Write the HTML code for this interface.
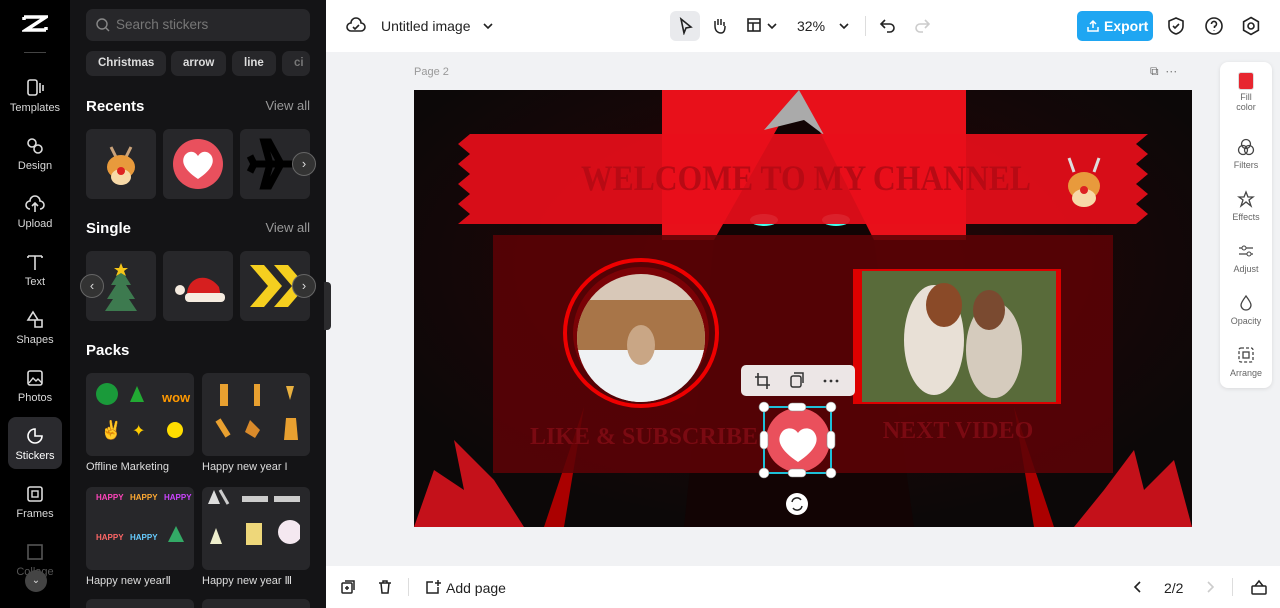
<!DOCTYPE html>
<html style="width:1280px;height:608px;overflow:hidden"><head><meta charset="utf-8"><style>
*{box-sizing:border-box;margin:0;padding:0}
body{width:1280px;height:608px;overflow:hidden;font-family:"Liberation Sans",sans-serif;background:#f1f2f4;position:relative}
.abs{position:absolute}
#nav{left:0;top:0;width:70px;height:608px;background:#000;overflow:hidden}
.ni{position:absolute;left:0;width:70px;text-align:center;color:#d8d8d8;font-size:11px}
.ni svg{display:block;margin:0 auto 4px}
#panel{left:70px;top:0;width:256px;height:608px;background:#141416;overflow:hidden}
.chip{position:absolute;top:51px;height:25px;background:#27272a;border-radius:7px;color:#ddd;font-size:11.5px;font-weight:bold;line-height:25px;padding:0 12px}
.h{position:absolute;color:#fff;font-weight:bold;font-size:15px}
.va{position:absolute;right:16px;color:#999;font-size:13px}
.tile{position:absolute;width:70px;height:70px;background:#27272a;border-radius:6px;overflow:hidden}
.pk{position:absolute;width:108px;height:83px;background:#27272a;border-radius:6px}
.pl{position:absolute;color:#ddd;font-size:11px}
.arr{position:absolute;width:24px;height:24px;border-radius:50%;background:#333;border:1px solid #666;color:#ddd;font-size:13px;text-align:center;line-height:21px}
#top{left:326px;top:0;width:954px;height:52px;background:#fff}
#bot{left:326px;top:566px;width:954px;height:42px;background:#fff}
#rp{left:1220px;top:62px;width:52px;height:326px;background:#fff;border-radius:8px;box-shadow:0 1px 4px rgba(0,0,0,.1)}
.ri{position:absolute;left:0;width:52px;text-align:center;font-size:9px;color:#666}
#cv{left:414px;top:90px;width:778px;height:437px;background:#0f0b0b;overflow:hidden}
</style></head><body>
<div id="nav" class="abs">
 <div class="abs" style="left:22px;top:14px;width:26px;height:22px">
 <svg width="26" height="20" viewBox="0 0 26 20"><path d="M2 3h22L4 16h20M2 3v3M24 16v-3" stroke="#fff" stroke-width="3.5" fill="none"/></svg></div>
 <div class="abs" style="left:24px;top:52px;width:22px;height:1px;background:#444"></div>
 <div class="ni" style="top:78px"><svg width="20" height="20"><rect x="3" y="2" width="9" height="15" rx="2" stroke="#ddd" fill="none" stroke-width="1.6"/><path d="M15 5v10M18 7v6" stroke="#ddd" stroke-width="1.6"/></svg>Templates</div>
 <div class="ni" style="top:136px"><svg width="20" height="20"><circle cx="7" cy="7" r="4" stroke="#ddd" fill="none" stroke-width="1.6"/><circle cx="13" cy="13" r="4" stroke="#ddd" fill="none" stroke-width="1.6"/></svg>Design</div>
 <div class="ni" style="top:194px"><svg width="20" height="20"><path d="M5 15a4 4 0 0 1 0-8 5 5 0 0 1 10 0 4 4 0 0 1 0 8M10 9v9M7 12l3-3 3 3" stroke="#ddd" fill="none" stroke-width="1.6"/></svg>Upload</div>
 <div class="ni" style="top:252px"><svg width="20" height="20"><path d="M3 4h14M10 4v14M3 4v2M17 4v2" stroke="#ddd" fill="none" stroke-width="1.6"/></svg>Text</div>
 <div class="ni" style="top:310px"><svg width="20" height="20"><path d="M8 2l5 8H3z M10 10h7v7h-7z" stroke="#ddd" fill="none" stroke-width="1.6"/></svg>Shapes</div>
 <div class="ni" style="top:368px"><svg width="20" height="20"><rect x="3" y="3" width="14" height="14" rx="2" stroke="#ddd" fill="none" stroke-width="1.6"/><path d="M4 15l4-5 3 3 2-2 4 4" stroke="#ddd" fill="none" stroke-width="1.4"/></svg>Photos</div>
 <div class="abs" style="left:8px;top:417px;width:54px;height:52px;background:#2a2a2e;border-radius:8px"></div>
 <div class="ni" style="top:426px;color:#fff"><svg width="20" height="20"><path d="M10 3a7 7 0 1 0 7 7h-7z" stroke="#fff" fill="none" stroke-width="1.6"/></svg>Stickers</div>
 <div class="ni" style="top:484px"><svg width="20" height="20"><rect x="3" y="3" width="14" height="14" rx="2" stroke="#ddd" fill="none" stroke-width="1.6"/><rect x="7" y="7" width="6" height="6" stroke="#ddd" fill="none" stroke-width="1.4"/></svg>Frames</div>
 <div class="ni" style="top:542px;color:#555;height:40px;overflow:hidden"><svg width="20" height="20"><rect x="3" y="3" width="14" height="14" stroke="#555" fill="none" stroke-width="1.6"/></svg>Collage</div>
 <div class="abs" style="left:25px;top:570px;width:22px;height:22px;border-radius:50%;background:#444;color:#ddd;font-size:10px;text-align:center;line-height:22px">⌄</div>
</div>
<div id="panel" class="abs">
 <div class="abs" style="left:16px;top:9px;width:224px;height:32px;background:#27272a;border-radius:7px;color:#777;font-size:13.5px;line-height:32px;padding-left:30px">Search stickers
  <svg class="abs" style="left:10px;top:9px" width="14" height="14"><circle cx="6" cy="6" r="5" stroke="#888" fill="none" stroke-width="1.4"/><path d="M10 10l3 3" stroke="#888" stroke-width="1.4"/></svg></div>
 <div class="chip" style="left:16px">Christmas</div>
 <div class="chip" style="left:101px">arrow</div>
 <div class="chip" style="left:162px">line</div>
 <div class="chip" style="left:212px;width:28px;padding:0 0 0 12px;color:#777;overflow:hidden">ci</div>
 <div class="h" style="left:16px;top:98px">Recents</div><div class="va" style="top:98px">View all</div>
 <div class="tile" style="left:16px;top:129px"><svg width="70" height="70"><path d="M25 18l5 10M45 18l-5 10" stroke="#c9a27a" stroke-width="3"/><ellipse cx="35" cy="38" rx="14" ry="12" fill="#e89a3c"/><ellipse cx="35" cy="48" rx="10" ry="8" fill="#f7d9a8"/><circle cx="35" cy="42" r="4" fill="#d22"/></svg></div>
 <div class="tile" style="left:93px;top:129px"><svg width="70" height="70"><circle cx="35" cy="35" r="25" fill="#e9505d"/><path d="M35 50C20 40 18 32 22 26c4-5 10-4 13 1 3-5 9-6 13-1 4 6 2 14-13 24z" fill="#fff"/></svg></div>
 <div class="tile" style="left:170px;top:129px"><svg width="70" height="70"><path d="M10 35h48M30 35l-6-22h5l12 22M30 35l-6 22h5l12-22M14 35l-4-8M14 35l-4 8" stroke="#000" stroke-width="7" fill="none"/></svg></div>
 <div class="arr" style="left:222px;top:152px">›</div>
 <div class="h" style="left:16px;top:220px">Single</div><div class="va" style="top:220px">View all</div>
 <div class="tile" style="left:16px;top:251px"><svg width="70" height="70"><path d="M35 18l-10 16h5l-9 14h6l-8 12h32l-8-12h6l-9-14h5z" fill="#3d7a4f"/><path d="M35 12l2 5h5l-4 3 2 5-5-3-5 3 2-5-4-3h5z" fill="#f5c518"/></svg></div>
 <div class="tile" style="left:93px;top:251px"><svg width="70" height="70"><path d="M24 44c0-18 20-24 32-8l2 10z" fill="#d61f1f"/><rect x="22" y="42" width="40" height="9" rx="4" fill="#f5ece0"/><circle cx="17" cy="39" r="5" fill="#f5ece0"/></svg></div>
 <div class="tile" style="left:170px;top:251px"><svg width="70" height="70"><path d="M10 14h14l18 21-18 21H10l18-21z M34 14h14l18 21-18 21H34l18-21z" fill="#f5cf1f"/></svg></div>
 <div class="arr" style="left:10px;top:274px">‹</div><div class="arr" style="left:222px;top:274px">›</div>
 <div class="h" style="left:16px;top:342px">Packs</div>
 <div class="pk" style="left:16px;top:373px"></div><div class="pk" style="left:132px;top:373px"></div>
 <div class="pl" style="left:16px;top:461px">Offline Marketing</div><div class="pl" style="left:132px;top:461px">Happy new year I</div>
 <div class="pk" style="left:16px;top:487px"></div><div class="pk" style="left:132px;top:487px"></div>
 <div class="pl" style="left:16px;top:574px">Happy new yearⅡ</div><div class="pl" style="left:132px;top:574px">Happy new year Ⅲ</div>
 <div class="pk" style="left:16px;top:599px;height:9px;border-radius:6px 6px 0 0"></div><div class="pk" style="left:132px;top:599px;height:9px;border-radius:6px 6px 0 0"></div>
 <svg class="abs" style="left:20px;top:378px" width="210" height="190">
  <circle cx="17" cy="16" r="11" fill="#1a9a3a"/><path d="M47 8l-7 16h14z" fill="#2a3"/><text x="72" y="24" font-size="13" fill="#f90" font-weight="bold">wow</text>
  <text x="10" y="58" font-size="18" fill="#fff">✌</text><text x="42" y="58" font-size="16" fill="#fc0">✦</text><circle cx="85" cy="52" r="8" fill="#fd0"/>
  <rect x="130" y="6" width="8" height="22" fill="#e8a030"/><rect x="164" y="6" width="6" height="22" fill="#e8a030"/><path d="M196 8l8 0-4 14z" fill="#e8b040"/>
  <path d="M128 42l10 16" stroke="#e8a030" stroke-width="6"/><path d="M160 42l10 10 -5 8-10-6z" fill="#d98a2a"/><path d="M196 40l10 0 2 22h-14z" fill="#e8a030"/>
  <text x="6" y="122" font-size="8" fill="#f4b" font-weight="bold">HAPPY</text><text x="40" y="122" font-size="8" fill="#fa3" font-weight="bold">HAPPY</text><text x="74" y="122" font-size="8" fill="#c4f" font-weight="bold">HAPPY</text>
  <text x="6" y="162" font-size="8" fill="#f66" font-weight="bold">HAPPY</text><text x="40" y="162" font-size="8" fill="#6cf" font-weight="bold">HAPPY</text><path d="M86 148l-8 16h16z" fill="#3a6"/>
  <path d="M124 112l6 14h-12z" fill="#ddd"/><path d="M130 112l8 14" stroke="#ccc" stroke-width="3"/><rect x="152" y="118" width="26" height="6" fill="#ccc"/><rect x="184" y="118" width="26" height="6" fill="#ccc"/>
  <path d="M126 150l6 16h-12z" fill="#eec"/><rect x="156" y="145" width="16" height="22" fill="#eed77a"/><circle cx="200" cy="154" r="12" fill="#f4e8f0"/>
 </svg>
</div>
<div class="abs" style="left:324px;top:282px;width:7px;height:48px;background:#2b2b2d;border-radius:0 4px 4px 0"></div>
<div id="top" class="abs">
 <svg class="abs" style="left:20px;top:17px" width="20" height="18"><path d="M5 14a4 4 0 0 1 0-8 5 5 0 0 1 10 0 4 4 0 0 1 0 8z M7 10l2 2 4-4" stroke="#222" fill="none" stroke-width="1.6"/></svg>
 <div class="abs" style="left:55px;top:18px;font-size:14px;color:#222">Untitled image</div>
 <svg class="abs" style="left:156px;top:20px" width="12" height="12"><path d="M2 4l4 4 4-4" stroke="#222" fill="none" stroke-width="1.6"/></svg>
 <div class="abs" style="left:344px;top:11px;width:30px;height:30px;background:#e9eaed;border-radius:6px"></div>
 <svg class="abs" style="left:352px;top:17px" width="16" height="18"><path d="M3 2l10 8-5 1-2 5z" stroke="#222" fill="none" stroke-width="1.6"/></svg>
 <svg class="abs" style="left:384px;top:16px" width="18" height="18"><path d="M5 10V5m3 4V3m3 6V3m3 7V6M5 10c0 5 3 7 6 7s4-3 4-7" stroke="#222" fill="none" stroke-width="1.5"/></svg>
 <svg class="abs" style="left:420px;top:17px" width="16" height="16"><rect x="2" y="2" width="12" height="12" stroke="#222" fill="none" stroke-width="1.6"/><path d="M2 6h12M7 6v8" stroke="#222" stroke-width="1.6"/></svg>
 <svg class="abs" style="left:440px;top:20px" width="12" height="12"><path d="M2 4l4 4 4-4" stroke="#222" fill="none" stroke-width="1.6"/></svg>
 <div class="abs" style="left:471px;top:18px;font-size:14px;color:#222">32%</div>
 <svg class="abs" style="left:512px;top:20px" width="12" height="12"><path d="M2 4l4 4 4-4" stroke="#222" fill="none" stroke-width="1.6"/></svg>
 <div class="abs" style="left:539px;top:16px;width:1px;height:20px;background:#ddd"></div>
 <svg class="abs" style="left:553px;top:17px" width="18" height="16"><path d="M6 3L2 7l4 4M2 7h9a4 4 0 0 1 0 8H8" stroke="#222" fill="none" stroke-width="1.6"/></svg>
 <svg class="abs" style="left:587px;top:17px" width="18" height="16"><path d="M12 3l4 4-4 4M16 7H7a4 4 0 0 0 0 8h3" stroke="#ccc" fill="none" stroke-width="1.6"/></svg>
 <div class="abs" style="left:751px;top:11px;width:76px;height:30px;background:#1fa6f2;border-radius:5px;color:#fff;font-size:14px;font-weight:bold;line-height:30px;padding-left:27px">Export
  <svg class="abs" style="left:9px;top:8px" width="14" height="14"><path d="M7 9V2M4 5l3-3 3 3M2 8v4h10V8" stroke="#fff" fill="none" stroke-width="1.5"/></svg></div>
 <svg class="abs" style="left:841px;top:16px" width="18" height="20"><path d="M9 2l7 3v5c0 4-3 7-7 8-4-1-7-4-7-8V5z M6 10l2 2 4-4" stroke="#222" fill="none" stroke-width="1.6"/></svg>
 <svg class="abs" style="left:878px;top:16px" width="20" height="20"><circle cx="10" cy="10" r="8" stroke="#222" fill="none" stroke-width="1.6"/><path d="M7.5 8a2.5 2.5 0 1 1 3 2.4V12M10 14.5v.5" stroke="#222" fill="none" stroke-width="1.6"/></svg>
 <svg class="abs" style="left:915px;top:16px" width="20" height="20"><path d="M10 1.5l7.4 4.25v8.5L10 18.5l-7.4-4.25v-8.5z" stroke="#222" fill="none" stroke-width="1.6"/><circle cx="10" cy="10" r="3" stroke="#222" fill="none" stroke-width="1.6"/></svg>
</div>
<div class="abs" style="left:414px;top:66px;font-size:11px;color:#999">Page 2</div>
<div class="abs" style="left:1150px;top:64px;font-size:12px;color:#666">⧉ &nbsp;⋯</div>
<div id="cv" class="abs">
 <svg width="778" height="437" viewBox="0 0 778 437">
  <defs><radialGradient id="g" cx="50%" cy="40%" r="60%"><stop offset="0" stop-color="#2a0406"/><stop offset="1" stop-color="#0c0808"/></radialGradient></defs>
  <rect width="778" height="437" fill="url(#g)"/>
  <rect x="248" y="0" width="304" height="150" fill="#e8101a"/>
  <path d="M300 150L385 0 460 150 500 437H270z" fill="#120404"/>
  <path d="M350 40L385 0l25 45 -20-15z" fill="#aaa"/>
  <path d="M0 437L20 380 50 400 40 350 80 390 110 437z" fill="#c4111a"/>
  <path d="M778 437L760 370 730 400 720 360 690 400 660 437z" fill="#c4111a"/>
  <path d="M130 437l40-120 -20 120z M640 437l-40-120 20 120z" fill="#a00"/>
  <ellipse cx="350" cy="130" rx="14" ry="6" fill="#4fe"/><ellipse cx="422" cy="130" rx="14" ry="6" fill="#4fe"/>
  <path d="M44 44h690l-12 10 12 10-12 10 12 10-12 10 12 10-12 10 12 10-12 10H44l12-10-12-10 12-10-12-10 12-10-12-10 12-10-12-10 12-10z" fill="#e80e1a" opacity=".92"/>
  <text x="392" y="100" text-anchor="middle" font-family="Liberation Serif,serif" font-size="36" font-weight="bold" fill="#b80a14" textLength="450" lengthAdjust="spacingAndGlyphs">WELCOME TO MY CHANNEL</text>
  <ellipse cx="670" cy="96" rx="16" ry="14" fill="#e89a3c"/><ellipse cx="670" cy="108" rx="12" ry="9" fill="#f7d9a8"/><circle cx="670" cy="100" r="4" fill="#d22"/><path d="M660 82l-5-14M680 82l5-14" stroke="#ddd" stroke-width="3"/>
  <rect x="79" y="145" width="620" height="238" fill="#5c0206" opacity=".88"/>
  <ellipse cx="227" cy="243" rx="76" ry="73" fill="none" stroke="#e00" stroke-width="4"/>
  <ellipse cx="227" cy="243" rx="68" ry="66" fill="#7a0206"/>
  <clipPath id="c"><ellipse cx="227" cy="248" rx="64" ry="64"/></clipPath>
  <g clip-path="url(#c)"><rect x="160" y="180" width="140" height="140" fill="#d8c8b8"/><rect x="160" y="210" width="140" height="50" fill="#a87548"/><rect x="160" y="260" width="140" height="60" fill="#f0f2f4"/><ellipse cx="227" cy="255" rx="14" ry="20" fill="#c9a685"/></g>
  <rect x="439" y="179" width="208" height="135" fill="#d00"/>
  <rect x="448" y="181" width="194" height="131" fill="#596b3a"/>
  <ellipse cx="520" cy="250" rx="30" ry="55" fill="#e8e0d6"/><ellipse cx="580" cy="260" rx="28" ry="48" fill="#d5cbbd"/><ellipse cx="530" cy="215" rx="18" ry="22" fill="#8a4a28"/><ellipse cx="575" cy="220" rx="16" ry="20" fill="#7a4a30"/>
  <text x="230" y="354" text-anchor="middle" font-family="Liberation Serif,serif" font-size="24" font-weight="bold" fill="#7a0a12">LIKE &amp; SUBSCRIBE</text>
  <text x="544" y="348" text-anchor="middle" font-family="Liberation Serif,serif" font-size="24" font-weight="bold" fill="#7a0a12">NEXT VIDEO</text>
  <rect x="327" y="275" width="114" height="31" rx="5" fill="#ece6e6"/>
  <path d="M344 283v12h12M341 287h12v12" stroke="#333" fill="none" stroke-width="1.6"/>
  <rect x="377" y="286" width="10" height="11" rx="2" stroke="#333" fill="none" stroke-width="1.5"/><path d="M380 283h9v10" stroke="#333" fill="none" stroke-width="1.5"/>
  <circle cx="411" cy="291" r="1.4" fill="#333"/><circle cx="417" cy="291" r="1.4" fill="#333"/><circle cx="423" cy="291" r="1.4" fill="#333"/>
  <ellipse cx="384" cy="350" rx="32" ry="32" fill="#ea505c"/>
  <path d="M384 372c-18-12-22-22-16-30 4-5 12-5 16 1 4-6 12-6 16-1 6 8 2 18-16 30z" fill="#fff"/>
  <rect x="350" y="317" width="67" height="66" fill="none" stroke="#1ec0d8" stroke-width="2"/>
  <g fill="#fff" stroke="#888" stroke-width=".6"><circle cx="350" cy="317" r="5"/><circle cx="417" cy="317" r="5"/><circle cx="350" cy="383" r="5"/><circle cx="417" cy="383" r="5"/>
  <rect x="374" y="313" width="18" height="8" rx="4"/><rect x="374" y="379" width="18" height="8" rx="4"/><rect x="346" y="341" width="8" height="18" rx="4"/><rect x="413" y="341" width="8" height="18" rx="4"/></g>
  <circle cx="383" cy="414" r="11" fill="#fff"/><path d="M378 412a5 5 0 0 1 9-2M388 416a5 5 0 0 1-9 2" stroke="#222" fill="none" stroke-width="1.5"/>
 </svg>
</div>
<div id="rp" class="abs">
 <div class="ri" style="top:10px"><div style="width:16px;height:18px;margin:0 auto 2px;background:#e7262f;border:1px solid #ddd;border-radius:3px"></div>Fill<br>color</div>
 <div class="ri" style="top:76px"><svg width="18" height="18" style="display:block;margin:0 auto 4px"><circle cx="9" cy="6" r="4.5" stroke="#444" fill="none" stroke-width="1.3"/><circle cx="6" cy="12" r="4.5" stroke="#444" fill="none" stroke-width="1.3"/><circle cx="12" cy="12" r="4.5" stroke="#444" fill="none" stroke-width="1.3"/></svg>Filters</div>
 <div class="ri" style="top:128px"><svg width="18" height="18" style="display:block;margin:0 auto 4px"><path d="M9 2l2 5h5l-4 3 2 6-5-4-5 4 2-6-4-3h5z" stroke="#444" fill="none" stroke-width="1.3"/></svg>Effects</div>
 <div class="ri" style="top:180px"><svg width="18" height="18" style="display:block;margin:0 auto 4px"><path d="M2 6h14M2 12h14" stroke="#444" stroke-width="1.3"/><circle cx="7" cy="6" r="2" fill="#fff" stroke="#444"/><circle cx="12" cy="12" r="2" fill="#fff" stroke="#444"/></svg>Adjust</div>
 <div class="ri" style="top:232px"><svg width="18" height="18" style="display:block;margin:0 auto 4px"><path d="M9 2c3 4 5 7 5 9a5 5 0 0 1-10 0c0-2 2-5 5-9z" stroke="#444" fill="none" stroke-width="1.3"/></svg>Opacity</div>
 <div class="ri" style="top:284px"><svg width="18" height="18" style="display:block;margin:0 auto 4px"><rect x="2" y="2" width="14" height="14" rx="2" stroke="#444" fill="none" stroke-width="1.3" stroke-dasharray="3 2"/><rect x="6" y="6" width="6" height="6" stroke="#444" fill="none" stroke-width="1.3"/></svg>Arrange</div>
</div>
<div id="bot" class="abs">
 <svg class="abs" style="left:14px;top:13px" width="16" height="16"><rect x="2" y="4" width="10" height="10" rx="1" stroke="#222" fill="none" stroke-width="1.5"/><path d="M5 2h9v9M7 7v4M5 9h4" stroke="#222" fill="none" stroke-width="1.5"/></svg>
 <svg class="abs" style="left:51px;top:13px" width="16" height="16"><path d="M2 4h12M6 4V2h4v2M4 4l1 10h6l1-10" stroke="#222" fill="none" stroke-width="1.5"/></svg>
 <div class="abs" style="left:82px;top:12px;width:1px;height:18px;background:#ddd"></div>
 <svg class="abs" style="left:98px;top:12px" width="18" height="18"><path d="M14 9v6H3V4h6M14 2v6M11 5h6" stroke="#222" fill="none" stroke-width="1.5"/></svg>
 <div class="abs" style="left:120px;top:14px;font-size:14px;color:#222">Add page</div>
 <svg class="abs" style="left:806px;top:14px" width="12" height="14"><path d="M8 2L3 7l5 5" stroke="#222" fill="none" stroke-width="1.6"/></svg>
 <div class="abs" style="left:838px;top:14px;font-size:14px;color:#222">2/2</div>
 <svg class="abs" style="left:878px;top:14px" width="12" height="14"><path d="M4 2l5 5-5 5" stroke="#ccc" fill="none" stroke-width="1.6"/></svg>
 <div class="abs" style="left:906px;top:12px;width:1px;height:18px;background:#ddd"></div>
 <svg class="abs" style="left:924px;top:12px" width="18" height="18"><rect x="2" y="8" width="14" height="8" rx="1" stroke="#222" fill="none" stroke-width="1.5"/><path d="M5 8l4-5 4 5" stroke="#222" fill="none" stroke-width="1.5"/></svg>
</div>
</body></html>
